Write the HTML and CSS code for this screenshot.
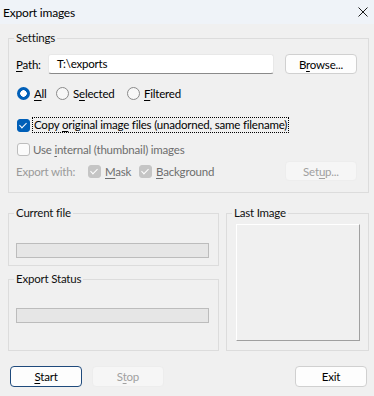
FILE: index.html
```html
<!DOCTYPE html>
<html lang="en">
<head>
  <meta charset="UTF-8">
  <title>Export images</title>
  <link rel="stylesheet" href="styles.css">
</head>
<body>
  <div class="titlebar">
    <span class="title">Export images</span>
    <svg class="close" width="10" height="10" viewBox="0 0 10 10">
      <path d="M0.5 0.5 L9.5 9.5 M9.5 0.5 L0.5 9.5" stroke="#1a1a1a" stroke-width="1" fill="none"/>
    </svg>
  </div>

  <div class="dialog">
    <fieldset class="group settings">
      <legend>Settings</legend>

      <div class="path-row">
        <span class="path-label"><u>P</u>ath:</span>
        <div class="textbox">T:\exports</div>
        <button class="btn browse">B<u>r</u>owse...</button>
      </div>

      <div class="radio-row">
        <span class="option opt-all"><i class="radio checked"></i><span><u>A</u>ll</span></span>
        <span class="option opt-selected"><i class="radio"></i><span>S<u>e</u>lected</span></span>
        <span class="option"><i class="radio"></i><span><u>F</u>iltered</span></span>
      </div>

      <div class="check-row copy-row">
        <i class="checkbox checked"></i>
        <span class="focus-label">Copy <u>o</u>riginal image files (unadorned, same filename)</span>
      </div>

      <div class="check-row use-row dimmed">
        <i class="checkbox"></i>
        <span>Use <u>i</u>nternal (thumbnail) images</span>
      </div>

      <div class="export-row">
        <span class="export-label">Export with:</span>
        <span class="option opt-mask dimmed"><i class="checkbox checked disabled"></i><span><u>M</u>ask</span></span>
        <span class="option dimmed"><i class="checkbox checked disabled"></i><span><u>B</u>ackground</span></span>
        <button class="btn setup" disabled>Set<u>u</u>p...</button>
      </div>
    </fieldset>

    <div class="lower">
      <div class="left-col">
        <fieldset class="group current">
          <legend>Current file</legend>
          <div class="progress"></div>
        </fieldset>
        <fieldset class="group status">
          <legend>Export Status</legend>
          <div class="progress"></div>
        </fieldset>
      </div>
      <fieldset class="group last-image">
        <legend>Last Image</legend>
        <div class="preview"></div>
      </fieldset>
    </div>

    <div class="buttons">
      <button class="btn default"><u>S</u>tart</button>
      <button class="btn stop" disabled>S<u>t</u>op</button>
      <button class="btn exit">Exit</button>
    </div>
  </div>
</body>
</html>
```

FILE: styles.css
```css
body {
  margin: 0;
  background-color: #f0f0f0;
  font-family: Lato, "Liberation Sans", sans-serif;
  font-size: 11.5px;
  letter-spacing: -0.2px;
  color: #000;
}

u {
  text-underline-offset: 2px;
}

.titlebar {
  height: 24px;
  background-color: #eff3f8;
  display: flex;
  align-items: center;
  justify-content: space-between;
  padding: 0 6px 0 3px;
}

.title {
  font-size: 12px;
}

.close {
  display: block;
}

.dialog {
  padding: 6px 5px 0 8px;
}

.group {
  margin: 0;
  padding: 0;
  border: 1px solid #dcdcdc;
  min-width: 0;
}

.group legend {
  margin-left: 5px;
  padding: 0 2px;
  line-height: 16px;
  color: #111;
}

/* settings box */
.settings {
  padding-bottom: 11px;
}

.path-row {
  display: flex;
  align-items: center;
  height: 20px;
  margin-top: 8px;
}

.path-label {
  width: 32px;
  margin-left: 7px;
}

.textbox {
  width: 216px;
  height: 18px;
  line-height: 18px;
  padding-left: 8px;
  background: #fff;
  border: 1px solid #e8e8e8;
  border-bottom-color: #8a8a8a;
  border-radius: 3px;
}

.btn {
  font-family: inherit;
  font-size: 11.5px;
  letter-spacing: -0.2px;
  height: 20px;
  width: 72px;
  padding: 0;
  background: #fdfdfd;
  border: 1px solid #d0d0d0;
  border-radius: 4px;
  color: #000;
}

.btn:disabled {
  background: #f6f6f6;
  border-color: #ededed;
  color: #a0a0a0;
}

.browse {
  margin-left: auto;
  margin-right: 11px;
}

.radio-row {
  display: flex;
  align-items: center;
  height: 16px;
  margin-top: 11px;
  padding-left: 8px;
}

.option {
  display: flex;
  align-items: center;
  gap: 4px;
}

.opt-all {
  width: 39px;
}

.opt-selected {
  width: 71px;
}

.radio {
  width: 11px;
  height: 11px;
  border: 1px solid #8a8a8a;
  border-radius: 50%;
  background: #f7f7f7;
  flex-shrink: 0;
}

.radio.checked {
  width: 13px;
  height: 13px;
  border: none;
  background: radial-gradient(circle, #fff 0 3px, #005fb8 3.5px);
}

.checkbox {
  width: 11px;
  height: 11px;
  border: 1px solid #8a8a8a;
  border-radius: 3px;
  background: #fbfbfb;
  flex-shrink: 0;
  position: relative;
}

.checkbox.checked {
  border-color: #005fb8;
  background: #005fb8;
}

.checkbox.checked::after {
  content: "";
  position: absolute;
  left: 3px;
  top: 1px;
  width: 3px;
  height: 6px;
  border: solid #fff;
  border-width: 0 1px 1px 0;
  transform: rotate(45deg);
}

.checkbox.disabled {
  border-color: #c5c5c5;
  background: #c5c5c5;
}

.check-row {
  display: flex;
  align-items: center;
  height: 16px;
  padding-left: 8px;
  gap: 2px;
}

.copy-row {
  margin-top: 16px;
}

.focus-label {
  border: 1px dotted #000;
  line-height: 14px;
  padding: 0 1px;
}

.use-row {
  margin-top: 8px;
  gap: 3px;
}

.use-row .checkbox {
  border-color: #bdbdbd;
}

.dimmed {
  color: #6d6d6d;
}

.export-row {
  display: flex;
  align-items: center;
  height: 20px;
  margin-top: 4px;
}

.export-label {
  width: 72px;
  margin-left: 7px;
  color: #9a9a9a;
}

.opt-mask {
  width: 51px;
}

.setup {
  margin-left: auto;
  margin-right: 11px;
}

/* lower boxes */
.lower {
  display: flex;
  gap: 7px;
  margin-top: 12px;
}

.left-col {
  width: 211px;
  display: flex;
  flex-direction: column;
  gap: 5px;
}

.progress {
  height: 13px;
  border: 1px solid #bcbcbc;
  background: #e6e6e6;
  margin: 0 9px 0 7px;
}

.current {
  padding-bottom: 7px;
}

.current .progress {
  margin-top: 22px;
}

.status {
  padding-bottom: 27px;
}

.status .progress {
  margin-top: 21px;
}

.last-image {
  flex: 1;
}

.preview {
  width: 122px;
  height: 115px;
  margin: 3px 0 0 9px;
  border: 1px solid #a0a0a0;
  border-top-color: #fff;
  border-left-color: #fff;
}

.buttons {
  display: flex;
  margin-top: 15px;
  padding-left: 2px;
  gap: 10px;
}

.btn.default {
  border-color: #1f4a7c;
  height: 21px;
}

.stop {
  height: 21px;
}

.exit {
  margin-left: auto;
  margin-right: 2px;
  height: 21px;
}
```
